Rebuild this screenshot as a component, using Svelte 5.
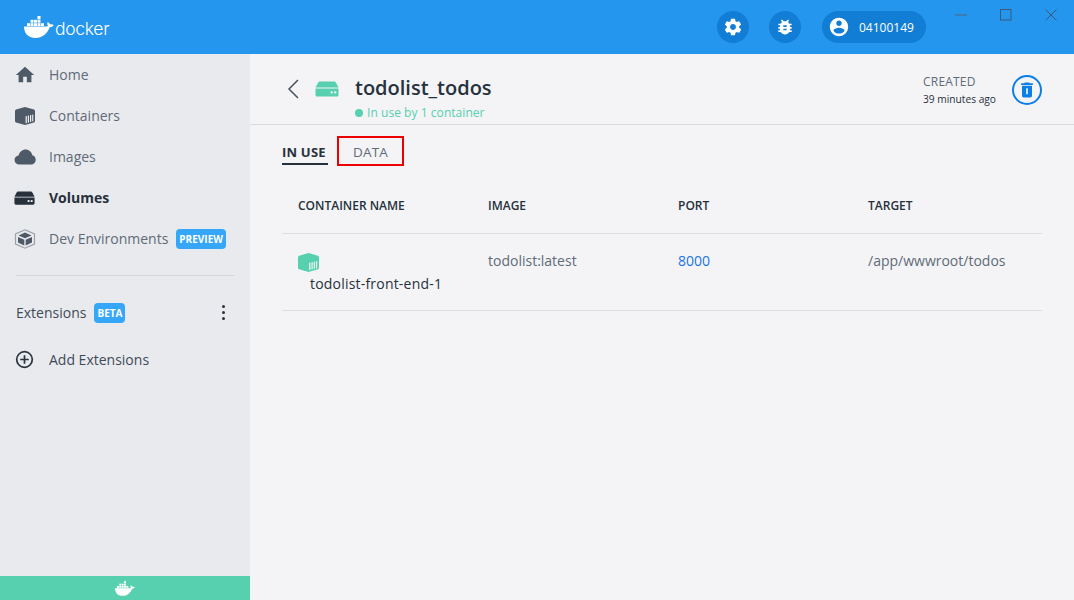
<script>
  const navItems = [
    { label: 'Home', icon: 'home' },
    { label: 'Containers', icon: 'container' },
    { label: 'Images', icon: 'cloud' },
    { label: 'Volumes', icon: 'volume', active: true },
    { label: 'Dev Environments', icon: 'dev', badge: 'PREVIEW' }
  ];
  const columns = ['CONTAINER NAME', 'IMAGE', 'PORT', 'TARGET'];
</script>

{#snippet whale(cls)}
  <svg class={cls} viewBox="0 0 30 22" fill="currentColor">
    <path d="M0 10.500H22c1 0 1.500-.3 2-.7-.8-1-.9-2.500-.3-3.800 1 .5 2 1.300 2.300 2.500 1.200-.4 2.700-.2 3.700.5-.8 1.500-2.300 2.200-4 2.200C23.500 17.500 18 22 11.500 22 4 22 0 17 0 10.500z" />
    <rect x="3" y="7.200" width="3" height="2.800" /><rect x="6.500" y="7.200" width="3" height="2.800" /><rect x="10" y="7.200" width="3" height="2.800" /><rect x="13.500" y="7.200" width="3" height="2.800" /><rect x="17" y="7.200" width="3" height="2.800" />
    <rect x="6.500" y="3.800" width="3" height="2.900" /><rect x="10" y="3.800" width="3" height="2.900" /><rect x="13.500" y="3.800" width="3" height="2.900" />
    <rect x="13.500" y="0" width="3" height="3.300" />
  </svg>
{/snippet}

{#snippet containerIcon(cls)}
  <svg class={cls} viewBox="0 0 20 18">
    <path fill="currentColor" d="M10 0l9 2.500q1 .5 1 1.500v10q0 1-1 1.500L10 18l-9-2.500q-1-.5-1-1.500V4q0-1 1-1.500z" />
    <path fill="#eef0f2" d="M10.600 9.300l1.200-.3v7l-1.200.3zM12.800 8.800l1.200-.3v6.900l-1.200.3zM15 8.300l1.200-.3v6.800l-1.200.3zM17.200 7.800l1.100-.3v6.800l-1.100.3z" />
  </svg>
{/snippet}

{#snippet volumeIcon(cls)}
  <svg class={cls} viewBox="0 0 24 16">
    <path fill="currentColor" d="M5 .5h14c1 0 1.500.5 2 1.200L23.500 6.500H.5L3 1.700C3.500 1 4 .5 5 .5zM.5 7.500h23v6.500c0 1-.7 1.600-1.600 1.600H2.100C1.200 15.600.5 15 .5 14z" />
    <rect x="15.500" y="10.200" width="2.400" height="2.400" rx="1" fill="#fff" opacity=".9" />
    <rect x="19" y="10.200" width="2.400" height="2.400" rx="1" fill="#fff" opacity=".9" />
  </svg>
{/snippet}

<div class="app">
  <header class="topbar">
    <div class="logo">
      {@render whale('logo-whale')}
      <span class="logo-text">docker</span>
    </div>
    <div class="top-actions">
      <button class="round" aria-label="Settings">
        <svg viewBox="0 0 24 24" width="20" height="20" fill="#fff"><path d="M19.430 12.980c.04-.32.070-.64.070-.98s-.03-.66-.07-.98l2.110-1.650c.19-.15.240-.42.120-.64l-2-3.460c-.12-.22-.39-.30-.61-.22l-2.490 1c-.52-.40-1.080-.73-1.690-.98l-.38-2.650C14.460 2.180 14.250 2 14 2h-4c-.25 0-.46.180-.49.420l-.38 2.650c-.61.250-1.170.59-1.690.98l-2.490-1c-.23-.09-.49 0-.61.220l-2 3.460c-.13.220-.07.490.12.640l2.110 1.650c-.04.320-.07.650-.07.980s.03.660.07.980l-2.110 1.650c-.19.150-.24.420-.12.640l2 3.460c.12.220.39.300.61.220l2.490-1c.52.400 1.080.730 1.690.980l.38 2.650c.03.240.24.420.49.420h4c.25 0 .46-.18.49-.42l.38-2.650c.61-.25 1.170-.59 1.690-.98l2.490 1c.23.090.49 0 .61-.22l2-3.460c.12-.22.070-.49-.12-.64l-2.110-1.650zM12 15.500c-1.930 0-3.500-1.570-3.500-3.500s1.570-3.500 3.500-3.500 3.500 1.570 3.500 3.500-1.570 3.500-3.500 3.500z" /></svg>
      </button>
      <button class="round" aria-label="Troubleshoot">
        <svg viewBox="0 0 24 24" width="20" height="20" fill="#fff"><path d="M20 8h-2.810c-.45-.78-1.070-1.450-1.820-1.960L17 4.410 15.590 3l-2.170 2.170C12.960 5.060 12.490 5 12 5c-.49 0-.96.060-1.410.17L8.410 3 7 4.410l1.620 1.630C7.880 6.550 7.260 7.220 6.810 8H4v2h2.090c-.05.330-.09.660-.09 1v1H4v2h2v1c0 .34.040.67.090 1H4v2h2.810c1.040 1.790 2.970 3 5.190 3s4.150-1.210 5.190-3H20v-2h-2.090c.05-.33.090-.66.090-1v-1h2v-2h-2v-1c0-.34-.04-.67-.09-1H20V8zm-6 8h-4v-2h4v2zm0-4h-4v-2h4v2z" /></svg>
      </button>
      <div class="user">
        <svg viewBox="0 0 24 24" width="22" height="22" fill="#fff"><path d="M12 2C6.480 2 2 6.480 2 12s4.480 10 10 10 10-4.480 10-10S17.520 2 12 2zm0 3c1.660 0 3 1.340 3 3s-1.340 3-3 3-3-1.340-3-3 1.340-3 3-3zm0 14.200c-2.500 0-4.710-1.280-6-3.220.030-1.990 4-3.080 6-3.080 1.990 0 5.970 1.090 6 3.080-1.290 1.940-3.500 3.220-6 3.220z" /></svg>
        <span>04100149</span>
      </div>
    </div>
    <div class="window-controls">
      <svg viewBox="0 0 12 12" width="12" height="12"><path d="M0 6h12" stroke="#4a6d8f" stroke-width="1.200" /></svg>
      <svg viewBox="0 0 12 12" width="12" height="12"><rect x=".5" y=".5" width="10.500" height="10.500" fill="none" stroke="#3c5a78" /></svg>
      <svg viewBox="0 0 12 12" width="12" height="12"><path d="M.5.5l11 11M11.500.5l-11 11" stroke="#3c5a78" /></svg>
    </div>
  </header>

  <div class="body">
    <aside class="sidebar">
      <nav class="nav">
        {#each navItems as item}
          <div class="nav-item" class:active={item.active}>
            <span class="nav-icon">
              {#if item.icon === 'home'}
                <svg viewBox="0 0 24 24" width="22" height="22" fill="currentColor"><path d="M10 20v-6h4v6h5v-8h3L12 3 2 12h3v8z" /></svg>
              {:else if item.icon === 'container'}
                {@render containerIcon('nav-container')}
              {:else if item.icon === 'cloud'}
                <svg viewBox="0 0 22 16" width="22" height="16" fill="currentColor"><path d="M5.500 15.500C2.500 15.500.5 13.500.5 11c0-2.400 1.800-4.200 4-4.500C5.500 3 8.300.5 11.500.5c3.500 0 6.300 2.500 6.800 5.800 2 .4 3.400 2.200 3.400 4.400 0 2.700-2.100 4.800-4.800 4.800z" /></svg>
              {:else if item.icon === 'volume'}
                {@render volumeIcon('nav-volume')}
              {:else}
                <svg viewBox="0 0 22 20" width="22" height="20"><path fill="none" stroke="#9aa1aa" stroke-width="1.200" d="M11 .8l9.500 4.200v10L11 19.200 1.500 15V5z" /><path fill="currentColor" d="M11 3.500l6.500 2.900L11 9.300 4.500 6.400zM4 8l6.300 2.800v5.600L4 13.600zM18 8l-6.300 2.800v5.600l6.300-2.800z" /></svg>
              {/if}
            </span>
            <span class="nav-label">{item.label}</span>
            {#if item.badge}<span class="badge">{item.badge}</span>{/if}
          </div>
        {/each}
      </nav>
      <div class="divider"></div>
      <div class="ext-row">
        <span class="ext-label">Extensions</span>
        <span class="badge">BETA</span>
        <span class="dots"><i></i><i></i><i></i></span>
      </div>
      <div class="add-ext">
        <span class="nav-icon add-icon">
          <svg viewBox="0 0 20 20" width="19" height="19" fill="none" stroke="#2a3440" stroke-width="1.800"><circle cx="10" cy="10" r="8.200" /><path d="M10 5.500v9M5.500 10h9" /></svg>
        </span>
        <span>Add Extensions</span>
      </div>
      <div class="status-bar">{@render whale('status-whale')}</div>
    </aside>

    <main class="main">
      <section class="vol-header">
        <svg class="back" viewBox="0 0 12 20" width="12" height="20" fill="none" stroke="#47525e" stroke-width="1.500"><path d="M11 1 2 10l9 9" /></svg>
        {@render volumeIcon('title-icon')}
        <div class="title-block">
          <h1>todolist_todos</h1>
          <div class="in-use"><span class="dot"></span>In use by 1 container</div>
        </div>
        <div class="created">
          <div class="created-label">CREATED</div>
          <div class="created-time">39 minutes ago</div>
        </div>
        <button class="delete" aria-label="Delete">
          <svg viewBox="0 0 24 24" width="20" height="20" fill="#0b7ee8"><path d="M6 19c0 1.100.9 2 2 2h8c1.100 0 2-.9 2-2V7H6zM19 4h-3.500l-1-1h-5l-1 1H5v2h14z" /><path d="M11 10h2v7h-2z" fill="#f4f4f6" /></svg>
        </button>
      </section>

      <div class="tabs">
        <span class="tab current">IN USE</span>
        <span class="tab marked">DATA</span>
      </div>

      <div class="table">
        <div class="row head">
          {#each columns as col}<div>{col}</div>{/each}
        </div>
        <div class="row data">
          <div class="name-cell">
            {@render containerIcon('row-icon')}
            <div class="cname">todolist-front-end-1</div>
          </div>
          <div class="muted">todolist:latest</div>
          <div class="link">8000</div>
          <div class="muted">/app/wwwroot/todos</div>
        </div>
      </div>
    </main>
  </div>
</div>

<style>
  :global(body) {
    margin: 0;
    font-family: "Open Sans", "Noto Sans", sans-serif;
    background: #f4f4f6;
  }

  .app {
    width: 1074px;
    height: 600px;
    display: flex;
    flex-direction: column;
    overflow: hidden;
    font-size: 14px;
  }

  .topbar {
    height: 54px;
    flex: none;
    background: #2496ed;
    display: flex;
    align-items: center;
    color: #fff;
    position: relative;
  }

  .logo {
    display: flex;
    align-items: center;
    margin-left: 24px;
    color: #fff;
  }

  :global(.logo-whale) {
    width: 30px;
    height: 22px;
  }

  .logo-text {
    font-family: "Inter", "Open Sans", sans-serif;
    font-size: 17.500px;
    font-weight: 300;
    letter-spacing: -0.300px;
    margin-left: 1px;
    margin-top: 2px;
  }

  .top-actions {
    display: flex;
    align-items: center;
    margin-left: auto;
    margin-right: 148px;
    gap: 20px;
  }

  .round {
    width: 32px;
    height: 32px;
    border: none;
    padding: 0;
    border-radius: 50%;
    background: #117dd4;
    display: flex;
    align-items: center;
    justify-content: center;
  }

  .user {
    height: 32px;
    width: 104px;
    margin-left: 1px;
    box-sizing: border-box;
    padding-left: 6px;
    border-radius: 16px;
    background: #117dd4;
    display: flex;
    align-items: center;
    gap: 9px;
    font-size: 12px;
  }

  .window-controls {
    position: absolute;
    top: 9px;
    right: 17px;
    display: flex;
    gap: 33px;
  }

  .body {
    flex: 1;
    display: flex;
    min-height: 0;
  }

  .sidebar {
    width: 250px;
    flex: none;
    background: #e9eaee;
    display: flex;
    flex-direction: column;
    position: relative;
  }

  .nav {
    display: flex;
    flex-direction: column;
  }

  .nav-item {
    height: 41px;
    display: flex;
    align-items: center;
    color: #5f6b78;
    font-size: 14px;
  }

  .nav-item.active {
    color: #27313c;
    font-weight: 700;
  }

  .nav-icon {
    width: 49px;
    padding-left: 14px;
    box-sizing: border-box;
    flex: none;
    display: flex;
    align-items: center;
    color: #4f5a68;
  }

  .nav-item.active .nav-icon {
    color: #27313c;
  }

  .add-icon {
    padding-left: 15px;
  }

  :global(.nav-container) {
    width: 20px;
    height: 18px;
    margin-left: 1px;
  }

  :global(.nav-volume) {
    width: 21px;
    height: 14px;
  }

  .badge {
    background: #36a7f8;
    color: #fff;
    font-size: 10px;
    font-weight: 700;
    line-height: 20px;
    height: 20px;
    padding: 0 3px;
    border-radius: 4px;
    margin-left: 8px;
    margin-top: 1px;
  }

  .divider {
    height: 1px;
    background: #d4d6da;
    margin: 16px 16px 0;
  }

  .ext-row {
    display: flex;
    align-items: center;
    height: 24px;
    margin-top: 24px;
    padding: 0 25px 0 16px;
    color: #3f4b58;
  }

  .dots {
    margin-left: auto;
    display: flex;
    flex-direction: column;
    gap: 3px;
  }

  .dots i {
    width: 3px;
    height: 3px;
    border-radius: 50%;
    background: #27313c;
  }

  .add-ext {
    display: flex;
    align-items: center;
    height: 24px;
    margin-top: 23px;
    color: #3f4b58;
  }

  .status-bar {
    margin-top: auto;
    height: 24px;
    background: #56d0af;
    display: flex;
    align-items: center;
    justify-content: center;
    color: #fff;
  }

  :global(.status-whale) {
    width: 20px;
    height: 15px;
  }

  .main {
    flex: 1;
    min-width: 0;
    background: #f4f4f6;
  }

  .vol-header {
    height: 71px;
    box-sizing: border-box;
    border-bottom: 1px solid #d9dadd;
    display: flex;
    align-items: flex-start;
    padding: 24px 32px 0 37px;
  }

  .back {
    margin-top: 1px;
  }

  :global(.title-icon) {
    width: 24px;
    height: 16px;
    margin: 3px 0 0 16px;
    color: #56d0af;
  }

  .title-block {
    margin-left: 16px;
    margin-top: -4px;
  }

  h1 {
    margin: 0;
    font-size: 20px;
    font-weight: 600;
    line-height: 28px;
    color: #27313c;
  }

  .in-use {
    display: flex;
    align-items: center;
    color: #56d0af;
    font-size: 12px;
    font-weight: 500;
    letter-spacing: 0.050px;
    line-height: 16px;
    margin-top: 3px;
  }

  .dot {
    width: 8px;
    height: 8px;
    border-radius: 50%;
    background: #56d0af;
    margin-right: 4px;
  }

  .created {
    margin-left: auto;
    margin-top: -5px;
  }

  .created-label {
    color: #5f6b78;
    font-size: 12px;
    font-weight: 500;
    letter-spacing: 0.200px;
    line-height: 17px;
  }

  .created-time {
    color: #27313c;
    font-size: 10.200px;
    line-height: 15px;
    margin-top: 2px;
  }

  .delete {
    width: 30px;
    height: 30px;
    box-sizing: border-box;
    border: 2px solid #0b7ee8;
    border-radius: 50%;
    background: none;
    padding: 0;
    margin: -3px 0 0 16px;
    display: flex;
    align-items: center;
    justify-content: center;
  }

  .tabs {
    display: flex;
    align-items: stretch;
    height: 30px;
    margin: 11px 0 0 32px;
  }

  .tab {
    font-size: 13px;
    font-weight: 600;
    letter-spacing: 0.200px;
  }

  .current {
    color: #27313c;
    font-weight: 700;
    border-bottom: 2px solid #27313c;
    line-height: 32px;
    height: 27px;
    width: 46px;
    white-space: nowrap;
  }

  .marked {
    margin-left: 9px;
    width: 67px;
    box-sizing: border-box;
    border: 2px solid #ee0000;
    color: #5f6b78;
    font-size: 13.500px;
    font-weight: 500;
    text-align: center;
    line-height: 28px;
  }

  .table {
    margin: 25px 32px 0;
  }

  .row {
    display: grid;
    grid-template-columns: repeat(4, 190px);
    padding-left: 16px;
    border-bottom: 1px solid #dcdde0;
  }

  .head {
    height: 42px;
    font-size: 12px;
    font-weight: 600;
    line-height: 30px;
    color: #27313c;
  }

  .data {
    height: 77px;
    font-size: 14px;
    padding-top: 16px;
    box-sizing: border-box;
    line-height: 22px;
  }

  .name-cell {
    margin-top: 3px;
  }

  :global(.row-icon) {
    display: block;
    width: 21px;
    height: 19px;
    color: #56d0af;
  }

  .cname {
    margin: 1px 0 0 12px;
    color: #27313c;
    font-weight: 500;
    letter-spacing: 0.200px;
    white-space: nowrap;
  }

  .muted {
    color: #5f6b78;
  }

  .link {
    color: #1a73e8;
  }
</style>
